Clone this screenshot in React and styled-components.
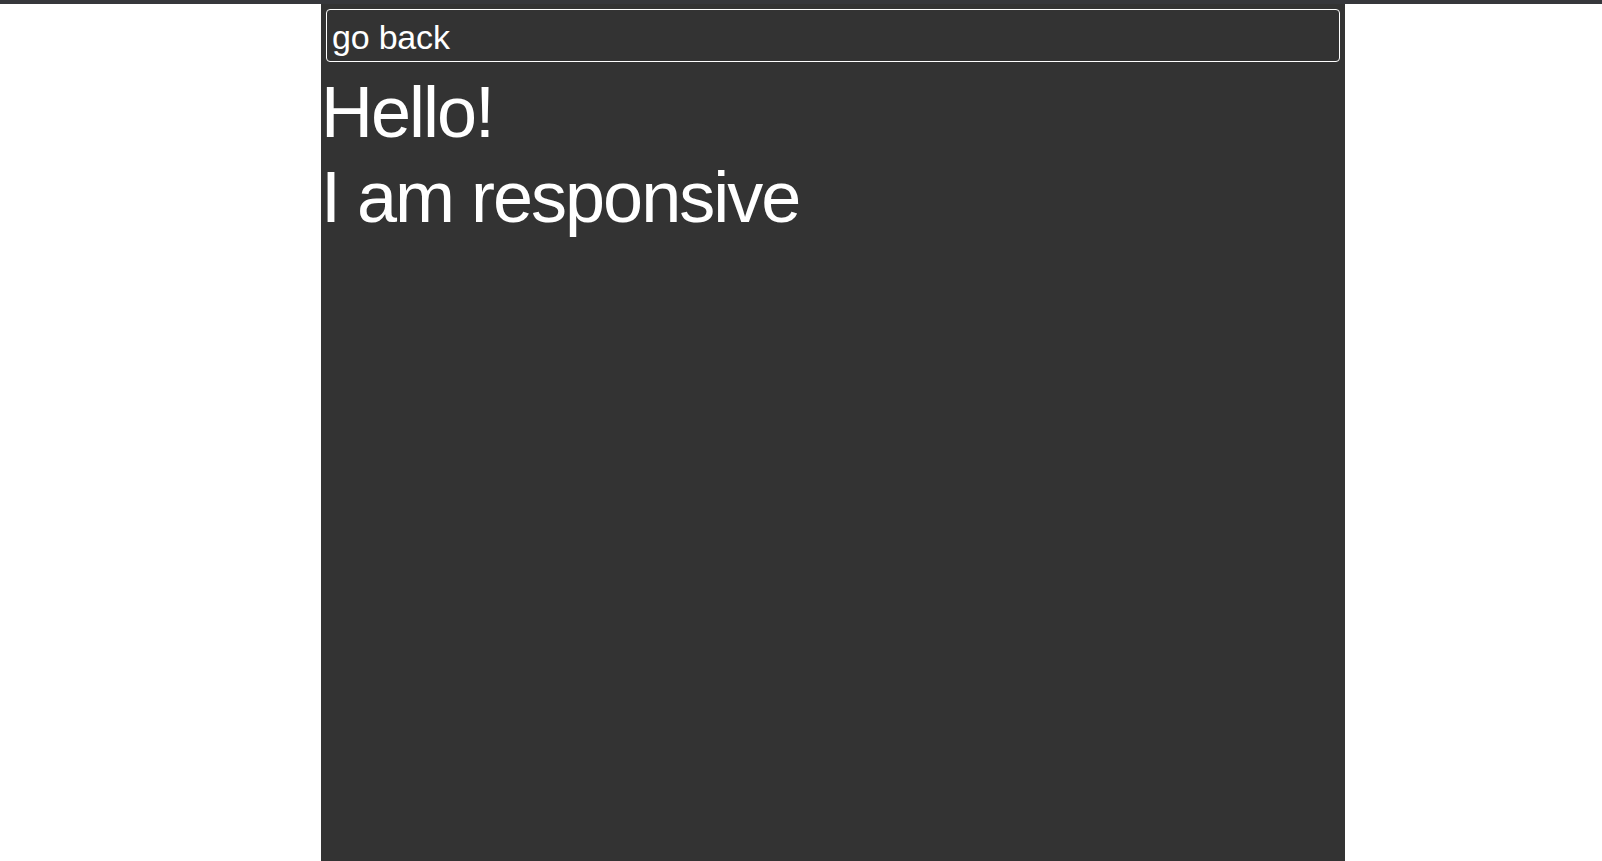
import styled, { createGlobalStyle } from "styled-components";

const GlobalStyle = createGlobalStyle`
  html, body {
    margin: 0;
    padding: 0;
    background: #fff;
  }
  body {
    font-family: "Liberation Sans", Arial, sans-serif;
    border-top: 4px solid #36373b;
  }
`

const Page = styled.div`
  min-height: 857px;
  display: flex;
`

const Panel = styled.main`
  margin-left: 321px;
  width: 1024px;
  background: #333333;
  color: #fff;
  display: flex;
  flex-direction: column;
`

const BackButton = styled.button`
  margin: 5px 5px 0;
  height: 53px;
  padding: 3px 5px 0;
  background: transparent;
  color: #fff;
  border: 1px solid #fff;
  border-radius: 4px;
  font-family: "Liberation Sans", Arial, sans-serif;
  font-size: 34px;
  letter-spacing: -0.2px;
  text-align: left;
  cursor: pointer;
`

const Heading = styled.div`
  font-size: 72px;
  line-height: 85px;
  letter-spacing: -2px;
  margin-top: ${p => p.$first ? "8px" : "0"};
`

export default function App() {
  return (
    <>
      <GlobalStyle />
      <Page>
        <Panel>
          <BackButton>go back</BackButton>
          <Heading $first>Hello!</Heading>
          <Heading>I am responsive</Heading>
        </Panel>
      </Page>
    </>
  )
}
